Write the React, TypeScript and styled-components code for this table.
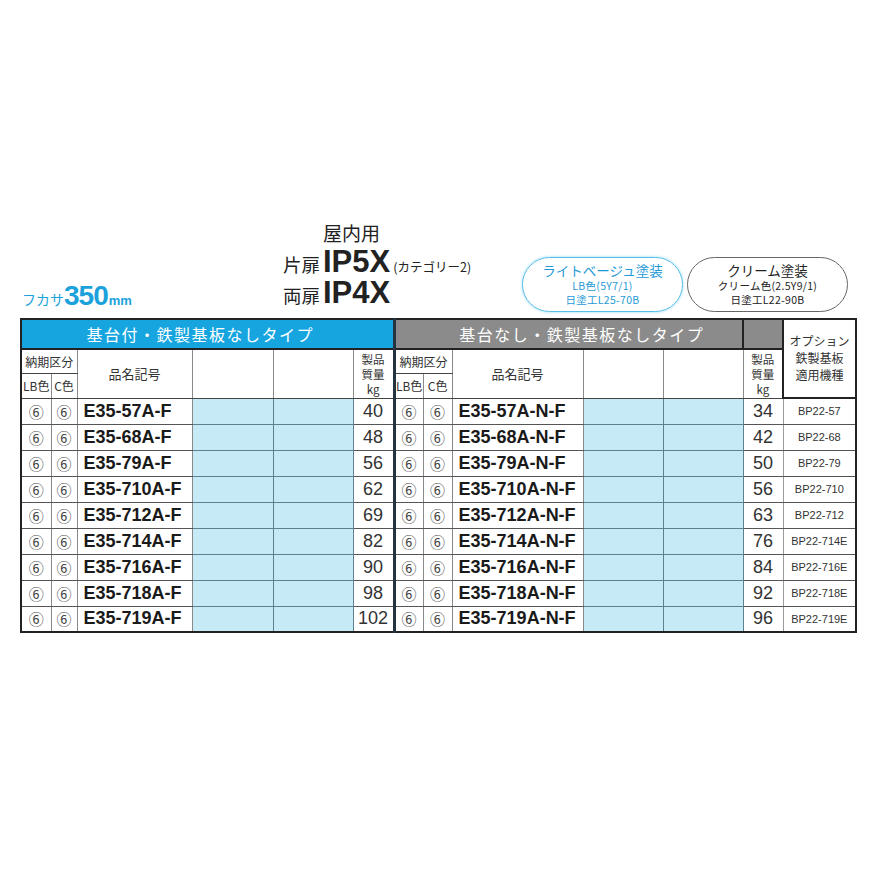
import React from 'react';
import styled, { createGlobalStyle } from 'styled-components';

const GlobalStyle = createGlobalStyle`
  html, body {
    margin: 0;
    padding: 0;
    background: #ffffff;
  }
  body {
    font-family: "Liberation Sans", "Noto Sans CJK JP", sans-serif;
    color: #222;
  }
`;

const JP = `"Noto Sans CJK JP", "Liberation Sans", sans-serif`;

const Page = styled.div`
  width: 876px;
  height: 876px;
  box-sizing: border-box;
  padding: 220px 21px 0 20px;
`;

const HeaderArea = styled.div`
  display: grid;
  grid-template-columns: 263px 239px auto;
  height: 98px;
`;

const Fukasa = styled.div`
  align-self: end;
  margin: 0 0 2px 2px;
  line-height: 30px;
  color: #1ba2dc;
  white-space: nowrap;
`;

const FukasaLabel = styled.span`
  font-family: ${JP};
  font-size: 14px;
`;

const FukasaValue = styled.span`
  font-family: "Liberation Sans", sans-serif;
  font-weight: 700;
  font-size: 28px;
  letter-spacing: -1px;
`;

const FukasaUnit = styled.span`
  margin-left: 1px;
  font-family: "Liberation Sans", sans-serif;
  font-weight: 700;
  font-size: 13px;
`;

const TitleBlock = styled.div`
  display: flex;
  flex-direction: column;
`;

const TitleLine = styled.div<{ $h: number }>`
  display: flex;
  align-items: baseline;
  height: ${({ $h }) => $h}px;
  line-height: ${({ $h }) => $h}px;
  white-space: nowrap;
`;

const DoorLabel = styled.span`
  width: 40px;
  font-family: ${JP};
  font-size: 18.5px;
  color: #222;
`;

const Indoor = styled.span`
  margin-left: 40px;
  font-family: ${JP};
  font-size: 19px;
  color: #222;
`;

const IPCode = styled.span`
  font-family: "Liberation Sans", sans-serif;
  font-weight: 700;
  font-size: 31px;
  color: #222;
`;

const Category = styled.span`
  margin-left: 3px;
  font-family: ${JP};
  font-size: 12.5px;
  color: #222;
`;

const Pills = styled.div`
  align-self: end;
  margin-bottom: 6px;
  display: flex;
  gap: 4px;
`;

const Pill = styled.div<{ $accent: boolean }>`
  width: 161px;
  height: 55px;
  box-sizing: border-box;
  border-radius: 28px;
  border: 1px solid ${({ $accent }) => ($accent ? '#58bfe8' : '#666')};
  box-shadow: ${({ $accent }) => ($accent ? '0 0 3px #8fd6f2' : 'none')};
  display: flex;
  flex-direction: column;
  align-items: center;
  justify-content: center;
  color: ${({ $accent }) => ($accent ? '#1f9ad6' : '#222')};
  font-family: ${JP};
`;

const PillTitle = styled.div`
  font-size: 13.5px;
  line-height: 17px;
`;

const PillSub = styled.div`
  font-size: 10.5px;
  line-height: 14px;
  letter-spacing: 0.3px;
`;

const Table = styled.table`
  width: 835px;
  table-layout: fixed;
  border-collapse: collapse;
  border: 2px solid #222;
  font-family: ${JP};
`;

const HeadRow = styled.tr`
  height: 30px;
`;

const SubRow = styled.tr<{ $h: number }>`
  height: ${({ $h }) => $h}px;
`;

const DataRow = styled.tr`
  height: 26px;
`;

const TypeCell = styled.td<{ $bg: string; $shift?: number; $split?: boolean }>`
  background: ${({ $bg }) => $bg};
  color: #ffffff;
  font-size: 16px;
  letter-spacing: 1.5px;
  text-align: center;
  padding: 0 ${({ $shift }) => $shift || 0}px 0 0;
  border: 2px solid #222;
  border-left: ${({ $split }) => ($split ? '1px solid #ffffff' : '2px solid #222')};
  white-space: nowrap;
`;

const SubCell = styled.td<{ $sep?: boolean }>`
  border: 1px solid #8a8a8a;
  border-left: ${({ $sep }) => ($sep ? '3px solid #233340' : '1px solid #8a8a8a')};
  border-bottom-color: #444;
  font-size: 12px;
  line-height: 15px;
  text-align: center;
  color: #333;
  padding: 0;
  white-space: nowrap;
`;

const WeightHead = styled(SubCell)`
  font-size: 11.5px;
  line-height: 15px;
  padding-top: 2px;
`;

const OptionHead = styled.td`
  border: 2px solid #222;
  font-size: 12px;
  line-height: 17px;
  text-align: center;
  vertical-align: top;
  padding-top: 12px;
  color: #333;
`;

const CircleCell = styled.td<{ $sep?: boolean }>`
  border: 1px solid #8a8a8a;
  border-left: ${({ $sep }) => ($sep ? '3px solid #233340' : '1px solid #8a8a8a')};
  border-bottom: 1px solid #555;
  text-align: center;
  font-size: 15px;
  color: #444;
  padding: 0;
`;

const NameCell = styled.td`
  border: 1px solid #8a8a8a;
  border-bottom: 1px solid #555;
  font-family: "Liberation Sans", sans-serif;
  font-weight: 700;
  font-size: 18px;
  color: #1a1a1a;
  padding: 0 0 0 6px;
  white-space: nowrap;
`;

const BlankCell = styled.td`
  background: #c6ebf7;
  border: 1px solid #5d8192;
  padding: 0;
`;

const WeightCell = styled.td`
  border: 1px solid #9a9a9a;
  border-bottom: 1px solid #555;
  font-family: "Liberation Sans", sans-serif;
  font-size: 18px;
  text-align: center;
  color: #333;
  padding: 0;
`;

const OptionCell = styled.td`
  border: 1px solid #8a8a8a;
  border-bottom: 1px solid #555;
  font-family: "Liberation Sans", sans-serif;
  font-size: 11px;
  text-align: center;
  color: #333;
  padding: 0;
  white-space: nowrap;
`;

const widths = [30, 26, 115, 81, 80, 41, 29, 29, 131, 80, 80, 40, 73];

const left: [string, number][] = [
  ['E35-57A-F', 40],
  ['E35-68A-F', 48],
  ['E35-79A-F', 56],
  ['E35-710A-F', 62],
  ['E35-712A-F', 69],
  ['E35-714A-F', 82],
  ['E35-716A-F', 90],
  ['E35-718A-F', 98],
  ['E35-719A-F', 102],
];

const right: [string, number, string][] = [
  ['E35-57A-N-F', 34, 'BP22-57'],
  ['E35-68A-N-F', 42, 'BP22-68'],
  ['E35-79A-N-F', 50, 'BP22-79'],
  ['E35-710A-N-F', 56, 'BP22-710'],
  ['E35-712A-N-F', 63, 'BP22-712'],
  ['E35-714A-N-F', 76, 'BP22-714E'],
  ['E35-716A-N-F', 84, 'BP22-716E'],
  ['E35-718A-N-F', 92, 'BP22-718E'],
  ['E35-719A-N-F', 96, 'BP22-719E'],
];

function SubHeader({ sep }: { sep?: boolean }) {
  return (
    <>
      <SubCell $sep={sep} colSpan={2}>納期区分</SubCell>
      <SubCell rowSpan={2} style={{ fontSize: 13 }}>品名記号</SubCell>
      <SubCell rowSpan={2} />
      <SubCell rowSpan={2} />
      <WeightHead rowSpan={2}>
        製品
        <br />
        質量
        <br />
        kg
      </WeightHead>
    </>
  );
}

export default function App() {
  return (
    <>
      <GlobalStyle />
      <Page>
        <HeaderArea>
          <Fukasa>
            <FukasaLabel>フカサ</FukasaLabel>
            <FukasaValue>350</FukasaValue>
            <FukasaUnit>mm</FukasaUnit>
          </Fukasa>
          <TitleBlock>
            <TitleLine $h={26}>
              <Indoor>屋内用</Indoor>
            </TitleLine>
            <TitleLine $h={31}>
              <DoorLabel>片扉</DoorLabel>
              <IPCode>IP5X</IPCode>
              <Category>(カテゴリー2)</Category>
            </TitleLine>
            <TitleLine $h={31}>
              <DoorLabel>両扉</DoorLabel>
              <IPCode>IP4X</IPCode>
            </TitleLine>
          </TitleBlock>
          <Pills>
            <Pill $accent>
              <PillTitle>ライトベージュ塗装</PillTitle>
              <PillSub>LB色(5Y7/1)</PillSub>
              <PillSub>日塗工L25-70B</PillSub>
            </Pill>
            <Pill $accent={false}>
              <PillTitle>クリーム塗装</PillTitle>
              <PillSub>クリーム色(2.5Y9/1)</PillSub>
              <PillSub>日塗工L22-90B</PillSub>
            </Pill>
          </Pills>
        </HeaderArea>

        <Table>
          <colgroup>
            {widths.map((w, i) => (
              <col key={i} style={{ width: w }} />
            ))}
          </colgroup>
          <tbody>
            <HeadRow>
              <TypeCell $bg="#16a5df" $shift={14} colSpan={6}>
                基台付・鉄製基板なしタイプ
              </TypeCell>
              <TypeCell $bg="#8b8b8b" $shift={0} colSpan={5} style={{ borderLeft: '3px solid #233340', paddingLeft: 26 }}>
                基台なし・鉄製基板なしタイプ
              </TypeCell>
              <TypeCell $bg="#8b8b8b" $split />
              <OptionHead rowSpan={3}>
                オプション
                <br />
                鉄製基板
                <br />
                適用機種
              </OptionHead>
            </HeadRow>
            <SubRow $h={24}>
              <SubHeader />
              <SubHeader sep />
            </SubRow>
            <SubRow $h={25}>
              <SubCell>LB色</SubCell>
              <SubCell>C色</SubCell>
              <SubCell $sep>LB色</SubCell>
              <SubCell>C色</SubCell>
            </SubRow>
            {left.map(([name, kg], i) => {
              const [rName, rKg, opt] = right[i];
              return (
                <DataRow key={name}>
                  <CircleCell>⑥</CircleCell>
                  <CircleCell>⑥</CircleCell>
                  <NameCell>{name}</NameCell>
                  <BlankCell />
                  <BlankCell />
                  <WeightCell>{kg}</WeightCell>
                  <CircleCell $sep>⑥</CircleCell>
                  <CircleCell>⑥</CircleCell>
                  <NameCell>{rName}</NameCell>
                  <BlankCell />
                  <BlankCell />
                  <WeightCell>{rKg}</WeightCell>
                  <OptionCell>{opt}</OptionCell>
                </DataRow>
              );
            })}
          </tbody>
        </Table>
      </Page>
    </>
  );
}
